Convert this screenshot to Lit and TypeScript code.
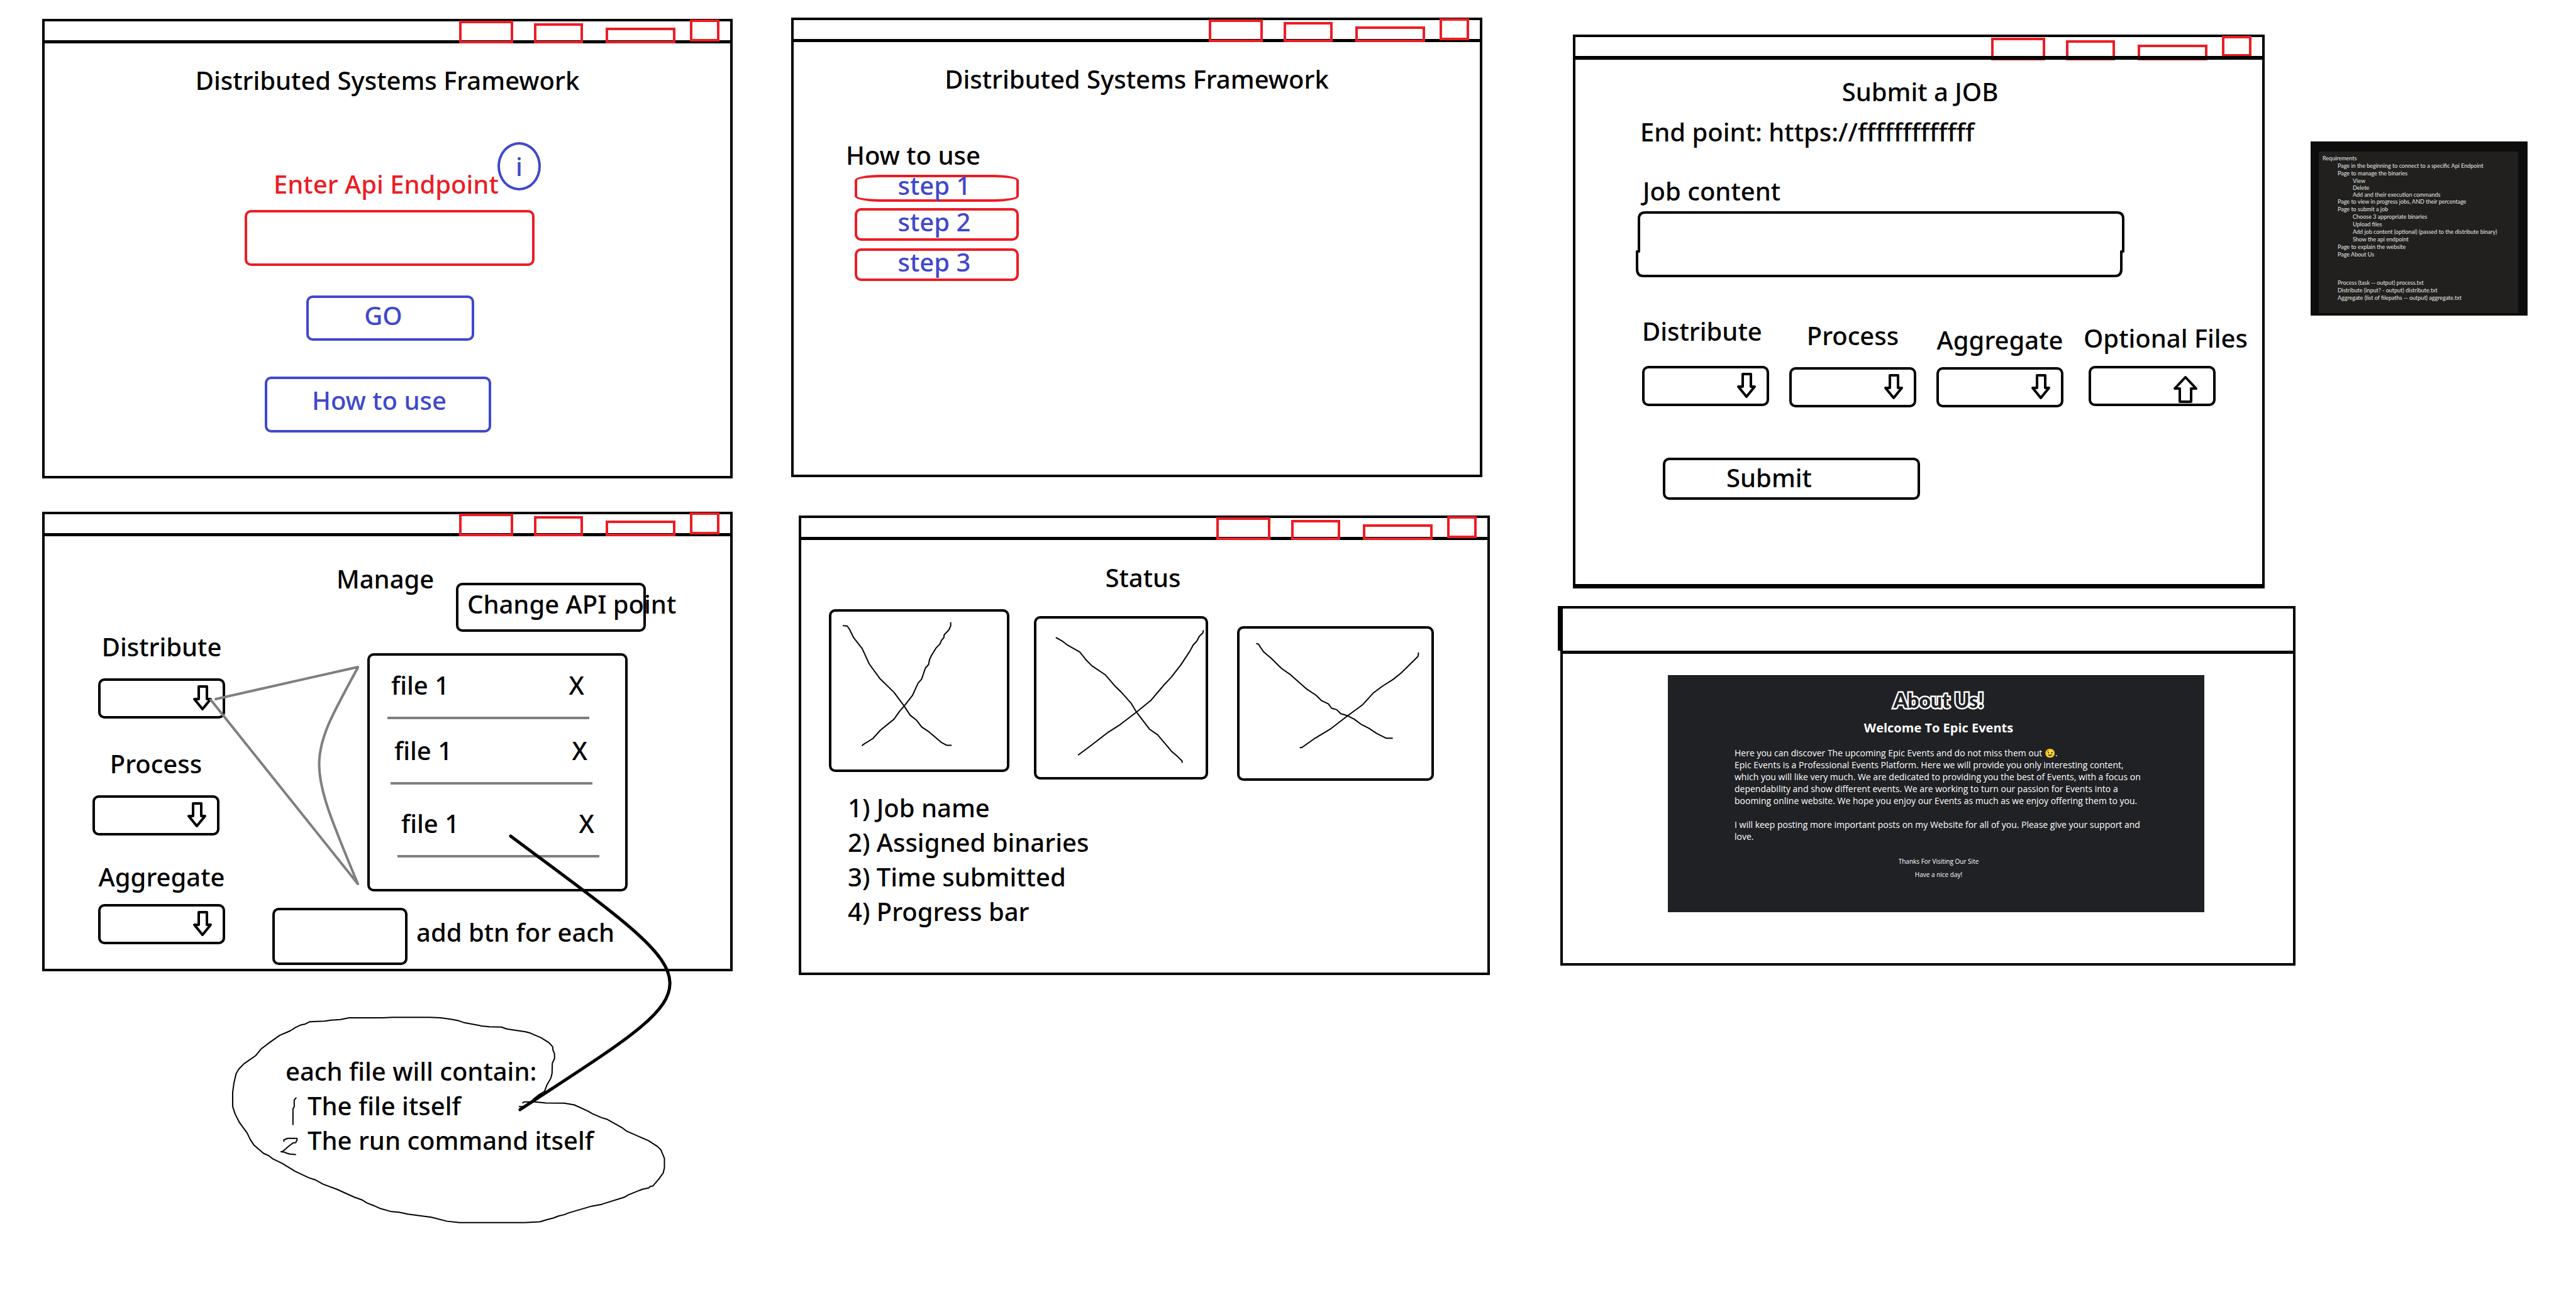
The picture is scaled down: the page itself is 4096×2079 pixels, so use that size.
import { LitElement, html, css, svg, nothing } from "lit";
import type { TemplateResult } from "lit";
import { customElement, property } from "lit/decorators.js";

/** A sketched browser window: a title bar with tabs above a content area. */
@customElement("sketch-board")
export class SketchBoard extends LitElement {
  @property({ type: Boolean }) tabs = false;

  static styles = css`
    :host {
      display: flex;
      flex-direction: column;
      box-sizing: border-box;
      min-height: 731px;
      color: #000;
    }
    .bar {
      display: flex;
      justify-content: flex-end;
      align-items: flex-end;
      box-sizing: border-box;
      height: 34px;
      padding-right: 17px;
      border: 4px solid #000;
      border-bottom: 0;
      position: relative;
      z-index: 1;
    }
    .tab {
      box-sizing: border-box;
      flex: none;
      padding: 0;
      border: 4px solid #ed1c24;
      background: none;
      margin-bottom: -5px;
    }
    .first { width: 86px; height: 36px; margin-right: 33px; }
    .second { width: 78px; height: 32px; margin-right: 36px; }
    .third { width: 111px; height: 25px; margin-right: 23px; }
    .last { width: 47px; height: 35px; margin-bottom: -2px; }
    .body {
      flex: 1;
      box-sizing: border-box;
      border: 4px solid #000;
      border-top-width: 5px;
      position: relative;
    }
    :host(.tucked) .bar { z-index: auto; }
    :host(.tucked) .body { border-top-width: 6px; border-bottom-width: 7px; z-index: 1; }
    :host(.tucked) .tab { margin-bottom: -7px; }
    :host(.tucked) .last { height: 33px; margin-bottom: -1px; }
    :host(.tall) .bar { height: 71px; border-left-width: 8px; }
    :host(.tall) .body { margin-left: 4px; }
  `;

  render() {
    return html`
      <nav class="bar">
        ${this.tabs
          ? ["first", "second", "third", "last"].map(
              (name) => html`<button class="tab ${name}" type="button" aria-label="${name} tab"></button>`
            )
          : nothing}
      </nav>
      <section class="body"><slot></slot></section>
    `;
  }
}

const downArrow = svg`<path d="M10 2H23V22H29L16 38L3 22H10Z" />`;
const upArrow = svg`<path d="M19 3L36 21H28V42H10V21H2Z" />`;

interface Cross { name: string; box: string; lines: string[]; }

const crosses: Cross[] = [
  {
    name: "one",
    box: "96 351 381 520",
    lines: [
      "122,397 130,398 135,408 144,436 163,473 178,523 201,571 232,617 254,662 267,692 281,709 292,731 308,747 334,781 346,791 356,791",
      "355,387 355,398 351,411 341,427 340,437 335,445 332,457 323,471 313,496 309,509 307,525 300,537 292,573 284,587 272,627 254,662 244,679 232,705 202,742 186,769 165,789 163,792",
    ],
  },
  {
    name: "two",
    box: "540 374 367 522",
    lines: [
      "583,437 597,449 608,462 634,484 646,507 660,529 690,560 709,594 725,618 746,654 757,682 785,738 803,757 833,811 848,831 856,843 856,848",
      "902,414 901,421 893,433 888,448 880,461 873,481 853,527 832,568 817,592 788,644 757,682 719,726 696,748 655,796 631,823",
    ],
  },
  {
    name: "three",
    box: "981 408 417 493",
    lines: [
      "1018,457 1022,459 1033,484 1050,506 1073,540 1092,560 1126,606 1147,627 1159,645 1174,656 1181,670 1192,675 1201,688 1216,695 1230,706 1245,723 1262,736 1279,753 1300,769 1313,769",
      "1370,488 1369,499 1333,553 1315,575 1291,598 1271,621 1249,658 1216,695 1180,737 1145,769 1117,799 1113,800",
    ],
  },
];

const cloud =
  "M1020 785L1035 765 1055 745 1063 710 1075 675 1079 650 1080 595 1087 570 1087 545 1082 525 1081 508 1070 487 1045 460 1010 435 995 428 935 413 918 403 880 401 855 397 800 380 783 370 760 362 725 354 690 351 570 351 540 354 433 354 405 363 375 366 355 371 307 375 293 387 280 391 262 405 245 423 212 447 182 482 152 520 135 555 98 598 82 625 73 650 66 700 62 750 62 825 70 865 83 908 108 965 118 1000 130 1030 160 1073 178 1087 190 1103 220 1127 260 1168 303 1202 325 1214 350 1237 395 1265 448 1305 473 1320 490 1337 510 1350 530 1365 568 1383 592 1386 620 1396 695 1413 745 1434 785 1441 990 1441 1040 1437 1060 1427 1083 1417 1100 1406 1118 1399 1133 1389 1205 1354 1237 1344 1310 1306 1322 1294 1365 1265 1387 1257 1392 1249 1400 1247 1418 1212 1433 1178 1437 1150 1437 1100 1425 1053 1413 1035 1387 1007 1315 954 1303 938 1280 917 1255 893 1237 884 1208 863 1193 849 1150 816 1118 807 1060 806 1025 800 990 800 986 805M975 825H995";

@customElement("app-root")
export class AppRoot extends LitElement {
  static styles = css`
    :host {
      display: block;
      min-height: 100vh;
      background: #fff;
      color: #000;
      font-family: "Noto Sans", "Open Sans", sans-serif;
      font-size: 40px;
      font-weight: 500;
      line-height: 55px;
    }
    * { box-sizing: border-box; }
    h1, h2, p, ul, ol, form { margin: 0; padding: 0; font-size: inherit; font-weight: inherit; }
    ul, ol { list-style: none; }
    button, input, select, textarea {
      margin: 0;
      padding: 0;
      border: 4px solid #000;
      border-radius: 10px;
      background: none;
      color: inherit;
      font: inherit;
      display: block;
    }
    select { appearance: none; }
    svg { display: block; fill: none; stroke: #000; stroke-linejoin: round; stroke-linecap: round; }

    .page { display: flex; align-items: flex-start; padding: 0 77px 0 67px; }
    .col { display: flex; flex-direction: column; min-width: 0; }
    .col-a { flex: 1098 1 0; margin-right: 93px; padding-top: 30px; }
    .col-b { flex: 1111 1 0; margin-right: 108px; padding-top: 28px; gap: 61px; }
    .col-c { flex: 1173 1 0; margin-right: 24px; padding-top: 55px; gap: 28px; }
    .col-d { flex: 345 1 0; padding-top: 225px; }
    .title { text-align: center; }

    /* Connect */
    .connect { padding-top: 31px; }
    .connect form { display: flex; flex-direction: column; align-items: flex-start; padding: 71px 0 0 318px; }
    .ask { display: flex; margin-left: 46px; height: 94px; color: #ed1c24; white-space: nowrap; }
    .ask label { align-self: flex-end; width: 356px; }
    .info { width: 69px; height: 77px; border-radius: 50%; }
    .blue { border-color: #3f48cc; color: #3f48cc; }
    .endpoint { width: 461px; height: 89px; margin-top: 14px; border-color: #ed1c24; }
    .go { width: 267px; height: 72px; margin: 47px 0 0 98px; padding: 0 22px 12px 0; }
    .how { width: 360px; height: 89px; margin: 57px 0 0 32px; padding: 0 0 15px 4px; }

    /* Guide */
    .guide { padding-top: 31px; }
    .guide h2 { margin: 66px 0 0 83px; }
    .steps { display: flex; flex-direction: column; gap: 10px; margin: 4px 0 0 97px; width: 261px; }
    .step {
      display: flex; align-items: center; justify-content: center;
      width: 100%; height: 52px; padding: 0 8px 10px 0; border-color: #ed1c24; color: #3f48cc;
    }
    .step.oval { height: 43px; border-radius: 40px / 9px; }
    .step:last-child { margin-top: 2px; }

    /* Manage */
    .manage { display: flex; }
    .fields { display: flex; flex-direction: column; gap: 44px; padding: 148px 0 0 76px; width: 362px; }
    .fields .field:last-child { gap: 16px; margin-top: -6px; }
    .field { display: flex; flex-direction: column; align-items: center; gap: 23px; width: 202px; white-space: nowrap; }
    .shifted { margin-left: 9px; }
    .pick { position: relative; width: 100%; height: 64px; }
    .pick select, .pick input { width: 100%; height: 100%; }
    .pick svg { position: absolute; top: 11px; right: 20px; width: 32px; height: 41px; stroke-width: 4; pointer-events: none; }
    .files-side { flex: 1; padding-top: 40px; }
    .head { display: flex; align-items: flex-start; padding-left: 102px; height: 113px; white-space: nowrap; }
    .head h1 { width: 190px; }
    .change { width: 302px; height: 78px; margin-top: 34px; padding: 0 0 12px 14px; text-align: left; }
    .files { width: 414px; height: 379px; margin: 33px 0 0 151px; padding-top: 19px; border: 4px solid #000; border-radius: 10px; }
    .file {
      display: flex; justify-content: space-between; width: 321px; height: 82px; margin: 0 0 22px 28px;
      padding: 0 8px 0 6px; border-bottom: 4px solid #7f7f7f;
    }
    .file + .file { margin-left: 33px; margin-bottom: 34px; }
    .file + .file + .file { margin-left: 44px; }
    .remove { border: 0; border-radius: 0; height: 55px; }
    .add { display: flex; align-items: center; gap: 14px; margin-top: 26px; }
    .add button { width: 215px; height: 91px; }
    .add label { padding-bottom: 15px; white-space: nowrap; }

    /* Manage board together with its margin note */
    .linked { position: relative; margin-top: 53px; }
    .wires { position: absolute; left: 0; top: 0; width: 1098px; height: 1200px; overflow: visible; pointer-events: none; }
    .wires path, .wires polyline { vector-effect: non-scaling-stroke; }
    .gray { stroke: #7f7f7f; stroke-width: 4; }
    .arrow { stroke-width: 5; }
    .thin { stroke-width: 2; }
    .memo { padding: 131px 0 0 387px; white-space: nowrap; }
    .memo li { padding-left: 35px; }

    /* Status */
    .col-b .intro { margin-right: 12px; }
    .col-b .status-board { margin-left: 12px; }
    .status { padding-top: 32px; }
    .status .title { padding-right: 4px; }
    .cards { display: flex; align-items: flex-start; margin: 23px 0 15px 44px; }
    .card { border: 4px solid #000; border-radius: 10px; }
    .card svg { width: 100%; height: 100%; stroke-width: 2; }
    .card polyline { vector-effect: non-scaling-stroke; }
    .one { width: 287px; height: 259px; margin-right: 39px; }
    .two { width: 277px; height: 260px; margin: 11px 46px 0 0; }
    .three { width: 313px; height: 246px; margin-top: 27px; }
    .facts { padding-left: 74px; }

    /* Submit */
    .submit-board { margin: 0 49px 0 24px; min-height: 881px; }
    .submit { padding-top: 23px; }
    .submit .title { padding-left: 4px; }
    .target { margin: 9px 0 39px 103px; }
    .content { margin-left: 96px; }
    .content label { display: block; padding-left: 11px; }
    .area { position: relative; width: 777px; height: 105px; margin-top: 5px; }
    .area textarea { width: 100%; height: 100%; padding: 12px; border: 0; resize: none; }
    .area svg { position: absolute; width: 100%; height: 100%; stroke-width: 4; pointer-events: none; }
    .picks { display: flex; align-items: flex-start; gap: 32px; margin: 58px 0 0 106px; }
    .picks .field { align-items: flex-start; gap: 28px; }
    .picks .lower { align-items: center; padding-top: 7px; gap: 23px; }
    .picks .lowest { align-items: center; padding-top: 14px; gap: 16px; }
    .picks .upload { align-items: flex-end; margin-left: 8px; padding-top: 11px; gap: 17px; }
    .picks .upload label { width: 210px; }
    .pick .up { top: 15px; right: 28px; width: 39px; height: 44px; }
    .pick input { position: absolute; opacity: 0; }
    .slot { height: 100%; border: 4px solid #000; border-radius: 10px; }
    .send { width: 409px; height: 67px; margin: 80px 0 0 139px; padding: 0 0 8px 97px; text-align: left; }

    /* About */
    .about-board { min-height: 572px; }
    .about {
      margin: 34px 141px 81px 167px;
      height: 377px;
      padding: 19px 0 0 106px;
      border-top: 1px solid #000;
      background: #202124;
      color: #fff;
      font: 400 14px/19px "Open Sans", "Noto Sans", sans-serif;
      white-space: nowrap;
    }
    .about h1, .about h2, .about .bye { padding-right: 98px; text-align: center; }
    .about h1 {
      color: #202124; -webkit-text-stroke: 5px #fff; paint-order: stroke fill;
      font: 900 32px/40px Lato, sans-serif;
    }
    .about h2 { margin: 10px 0 16px; font-size: 20px; font-weight: 700; line-height: 28px; }
    .about p + p { margin-top: 19px; }
    .about .bye { margin-top: 20px; font-size: 10px; line-height: 21px; }

    /* Requirements */
    .needs { padding: 16px 15px 4px 13px; background: #0d0d0d; }
    .sheet {
      min-height: 257px; padding: 5px 0 0 6px; background: #21201e; color: #e8e8e8;
      font: 400 9px/12px Lato, sans-serif; white-space: nowrap;
    }
    .sheet ul { padding-left: 24px; }
    .sheet .dense { line-height: 11px; }
    .sheet .outputs { margin-top: 33px; }
  `;

  private picker(id: string, label: string, extra = "") {
    return html`
      <div class="field ${extra}">
        <label for=${id}>${label}</label>
        <div class="pick">
          <select id=${id}><option value=""></option></select>
          <svg viewBox="0 0 32 41" aria-hidden="true">${downArrow}</svg>
        </div>
      </div>
    `;
  }

  private connect(): TemplateResult {
    return html`
      <sketch-board tabs>
        <div class="connect">
          <h1 class="title">Distributed Systems Framework</h1>
          <form @submit=${(e: Event) => e.preventDefault()}>
            <div class="ask">
              <label for="endpoint">Enter Api Endpoint</label>
              <button class="info blue" type="button">i</button>
            </div>
            <input class="endpoint" id="endpoint" type="text" />
            <button class="go blue">GO</button>
            <button class="how blue" type="button">How to use</button>
          </form>
        </div>
      </sketch-board>
    `;
  }

  private manage(): TemplateResult {
    return html`
      <sketch-board tabs>
        <div class="manage">
          <div class="fields">
            ${this.picker("m-distribute", "Distribute", "shifted")}
            ${this.picker("m-process", "Process")}
            ${this.picker("m-aggregate", "Aggregate", "shifted")}
          </div>
          <div class="files-side">
            <div class="head">
              <h1>Manage</h1>
              <button class="change" type="button">Change API point</button>
            </div>
            <ul class="files">
              ${[1, 1, 1].map(
                (n) => html`<li class="file"><span>file ${n}</span><button class="remove" type="button">X</button></li>`
              )}
            </ul>
            <div class="add">
              <button id="add" type="button"></button>
              <label for="add">add btn for each</label>
            </div>
          </div>
        </div>
      </sketch-board>
    `;
  }

  private memo(): TemplateResult {
    return html`
      <div class="memo">
        <p>each file will contain:</p>
        <ol>
          <li>The file itself</li>
          <li>The run command itself</li>
        </ol>
      </div>
      <svg class="wires" viewBox="0 0 1098 1200" aria-hidden="true">
        <g class="gray">
          <path d="M276 298L502 247M268 299L502 592M502 248C420 398 420 394 502 592" />
        </g>
        <path class="arrow" d="M745 516C1080 767 1080 740 760 951" />
        <g class="thin" transform="translate(272 699) scale(0.4993 0.2996)">
          <path d=${cloud} />
          <polyline points="264,779 258,790 258,825 254,838 254,920" />
          <polyline points="225,1010 225,1002 237,994 267,994 267,1002 263,1016 254,1018 245,1030 235,1043 232,1048 222,1062 216,1065 227,1067 235,1073 245,1077 262,1080" />
        </g>
      </svg>
    `;
  }

  private guide(): TemplateResult {
    return html`
      <sketch-board tabs class="intro">
        <div class="guide">
          <h1 class="title">Distributed Systems Framework</h1>
          <h2>How to use</h2>
          <div class="steps">
            <button class="step oval" type="button">step 1</button>
            <button class="step" type="button">step 2</button>
            <button class="step" type="button">step 3</button>
          </div>
        </div>
      </sketch-board>
    `;
  }

  private status(): TemplateResult {
    return html`
      <sketch-board tabs class="status-board">
        <div class="status">
          <h1 class="title">Status</h1>
          <div class="cards">
            ${crosses.map(
              (c) => html`
                <div class="card ${c.name}">
                  <svg viewBox=${c.box} preserveAspectRatio="none" aria-hidden="true">
                    ${c.lines.map((points) => svg`<polyline points=${points} />`)}
                  </svg>
                </div>
              `
            )}
          </div>
          <ul class="facts">
            <li>1) Job name</li>
            <li>2) Assigned binaries</li>
            <li>3) Time submitted</li>
            <li>4) Progress bar</li>
          </ul>
        </div>
      </sketch-board>
    `;
  }

  private submit(): TemplateResult {
    return html`
      <sketch-board tabs class="tucked submit-board">
        <div class="submit">
          <h1 class="title">Submit a JOB</h1>
          <p class="target">End point: https://fffffffffffff</p>
          <div class="content">
            <label for="job">Job content</label>
            <div class="area">
              <svg viewBox="0 0 777 105" preserveAspectRatio="none" aria-hidden="true">
                <path d="M5 64V12Q5 2 15 2H765Q775 2 775 12V64M772 64V92Q772 103 762 103H12Q2 103 2 92V64" />
              </svg>
              <textarea id="job"></textarea>
            </div>
          </div>
          <div class="picks">
            ${this.picker("s-distribute", "Distribute")}
            ${this.picker("s-process", "Process", "lower")}
            ${this.picker("s-aggregate", "Aggregate", "lowest")}
            <div class="field upload">
              <label for="upload">Optional Files</label>
              <div class="pick">
                <input id="upload" type="file" />
                <div class="slot"></div>
                <svg class="up" viewBox="0 0 39 44" aria-hidden="true">${upArrow}</svg>
              </div>
            </div>
          </div>
          <button class="send" type="button">Submit</button>
        </div>
      </sketch-board>
    `;
  }

  private about(): TemplateResult {
    return html`
      <sketch-board class="tall about-board">
        <article class="about">
          <h1>About Us!</h1>
          <h2>Welcome To Epic Events</h2>
          <p>
            Here you can discover The upcoming Epic Events and do not miss them out 😉.<br />
            Epic Events is a Professional Events Platform. Here we will provide you only interesting content,<br />
            which you will like very much. We are dedicated to providing you the best of Events, with a focus on<br />
            dependability and show different events. We are working to turn our passion for Events into a<br />
            booming online website. We hope you enjoy our Events as much as we enjoy offering them to you.
          </p>
          <p>
            I will keep posting more important posts on my Website for all of you. Please give your support and<br />
            love.
          </p>
          <div class="bye">Thanks For Visiting Our Site<br />Have a nice day!</div>
        </article>
      </sketch-board>
    `;
  }

  private needs(): TemplateResult {
    return html`
      <aside class="needs">
        <div class="sheet">
          Requirements
          <ul>
            <li>Page in the beginning to connect to a specific Api Endpoint</li>
            <li>
              Page to manage the binaries
              <ul class="dense">
                <li>View</li>
                <li>Delete</li>
                <li>Add and their execution commands</li>
              </ul>
            </li>
            <li>Page to view in progress jobs, AND their percentage</li>
            <li>
              Page to submit a job
              <ul>
                <li>Choose 3 appropriate binaries</li>
                <li>Upload files</li>
                <li>Add job content (optional) (passed to the distribute binary)</li>
                <li>Show the api endpoint</li>
              </ul>
            </li>
            <li>Page to explain the website</li>
            <li>Page About Us</li>
          </ul>
          <ul class="outputs">
            <li>Process (task -- output) process.txt</li>
            <li>Distribute (input? - output) distribute.txt</li>
            <li>Aggregate (list of filepaths -- output) aggregate.txt</li>
          </ul>
        </div>
      </aside>
    `;
  }

  render() {
    return html`
      <main class="page">
        <div class="col col-a">
          ${this.connect()}
          <div class="linked">${this.manage()}${this.memo()}</div>
        </div>
        <div class="col col-b">${this.guide()}${this.status()}</div>
        <div class="col col-c">${this.submit()}${this.about()}</div>
        <div class="col col-d">${this.needs()}</div>
      </main>
    `;
  }
}
